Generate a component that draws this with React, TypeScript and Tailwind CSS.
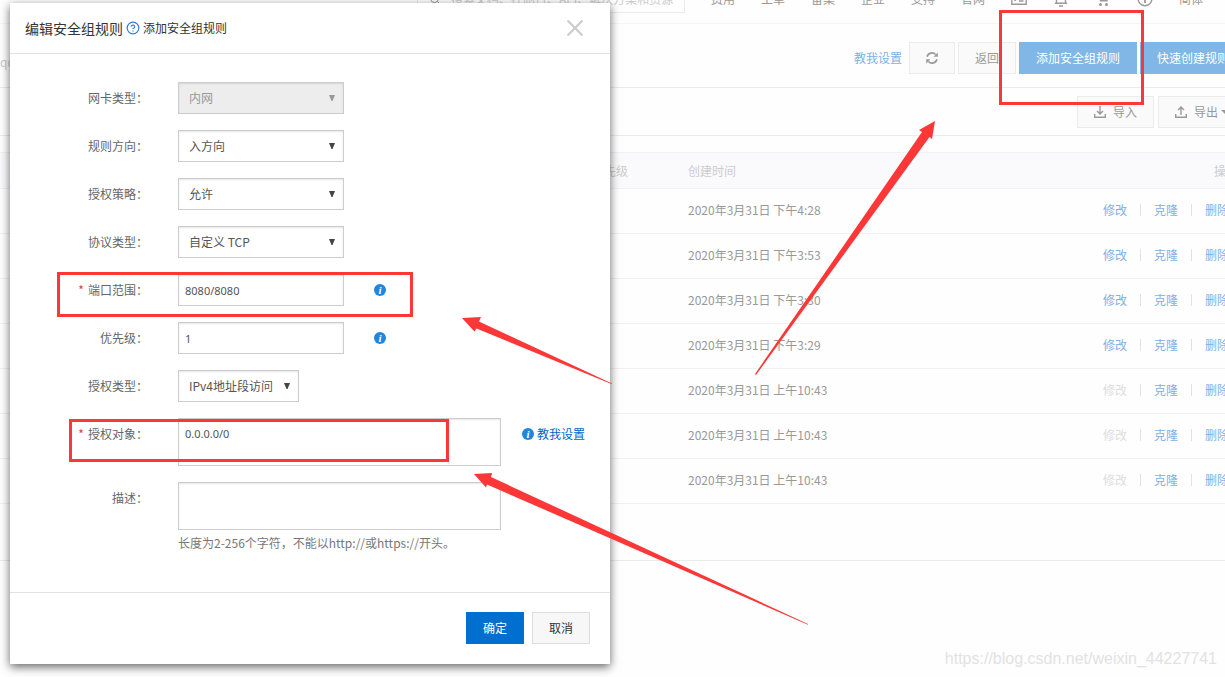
import type { ReactNode } from 'react'
import { CircleHelp, Search } from 'lucide-react'

const navItems = ['费用', '工单', '备案', '企业', '支持', '官网']

const rules = [
  { created: '2020年3月31日 下午4:28', editable: true },
  { created: '2020年3月31日 下午3:53', editable: true },
  { created: '2020年3月31日 下午3:30', editable: true },
  { created: '2020年3月31日 下午3:29', editable: true },
  { created: '2020年3月31日 上午10:43', editable: false },
  { created: '2020年3月31日 上午10:43', editable: false },
  { created: '2020年3月31日 上午10:43', editable: false },
]

const fieldClass =
  'block rounded-none border border-[#ccc] bg-white text-[#555] shadow-[inset_0_1px_2px_rgba(0,0,0,0.1)] outline-none'

function InfoDot() {
  return (
    <span className="flex h-3 w-3 items-center justify-center rounded-full bg-[#2187d8] font-['Liberation_Serif',serif] text-[11px] leading-3 font-bold text-white italic">
      i
    </span>
  )
}

function TrayIcon({ up = false }: { up?: boolean }) {
  return (
    <svg viewBox="0 0 12 12" className="h-3 w-3" fill="none" stroke="currentColor" strokeWidth="1.4">
      <path d="M.7 8v3.3h10.6V8" />
      <path d={up ? 'M6 9V1M3 4l3-3 3 3' : 'M6 0v8M3 5l3 3 3-3'} />
    </svg>
  )
}

function RefreshIcon() {
  return (
    <svg viewBox="0 0 12 12" className="h-3 w-3" fill="none" stroke="currentColor" strokeWidth="1.7">
      <path d="M1.100 4.800A5 5 0 0 1 9.600 2.500M10.900 7.200A5 5 0 0 1 2.400 9.500" />
      <path d="M11.800.6v4.200H7.600zM.2 11.400V7.200h4.200z" fill="currentColor" stroke="none" />
    </svg>
  )
}

function NavIcons() {
  return (
    <>
      <svg viewBox="0 0 16 16" className="h-4 w-4" fill="none" stroke="currentColor" strokeWidth="1.4">
        <path d="M.8 1.800h14.400v11.400H.8z" />
        <path d="M3.500 5l2.500 2.500-2.500 2.500M8 10h4.500" />
      </svg>
      <svg viewBox="0 0 16 16" className="h-4 w-4" fill="none" stroke="currentColor" strokeWidth="1.4">
        <path d="M3.500 12V7a4.500 4.500 0 0 1 9 0v5M1.800 12.200h12.400M8 1v1.500M6 15h4" />
      </svg>
      <svg viewBox="0 0 16 16" className="h-4 w-4" fill="currentColor">
        <path d="M1 2h2.500l.6 2H14l-1.500 6.500H5L3 3.400H1z" />
        <circle cx="5.500" cy="13.500" r="1.500" />
        <circle cx="11.500" cy="13.500" r="1.500" />
      </svg>
      <svg viewBox="0 0 16 16" className="h-4 w-4" fill="none" stroke="currentColor" strokeWidth="1.4">
        <circle cx="8" cy="8" r="6.800" />
        <path d="M8 4v1.500M8 7v5" strokeWidth="1.800" />
      </svg>
    </>
  )
}

function TopNav() {
  return (
    <header className="-mt-[26px] flex h-[50px] items-center justify-end gap-[26px] border-b border-[#f5f5f5] pr-[43px] text-[#999]">
      <label className="flex h-7 w-[268px] items-center gap-[10px] border border-[#ebebeb] pl-[11px]">
        <Search className="h-3 w-3 shrink-0" />
        <input
          aria-label="搜索"
          placeholder="搜索文档、控制台、API、解决方案和资源"
          className="min-w-0 flex-1 bg-transparent outline-none placeholder:text-[#ccc]"
        />
      </label>
      {navItems.map((item) => (
        <a key={item} href="#">
          {item}
        </a>
      ))}
      <NavIcons />
      <a href="#">简体</a>
    </header>
  )
}

function Toolbar() {
  const grey = 'h-8 border border-[#ebebeb] bg-[#fafafa] px-4 text-[#999]'
  const blue = 'h-8 bg-[#80b7e6] px-[17px] text-white'
  return (
    <>
      <div className="flex h-16 items-center border-b border-[#ebebeb] pt-1">
        <span className="pt-2 text-[#ccc]">qq</span>
        <div className="ml-auto flex items-center gap-[3px]">
          <a href="#" className="mr-1 text-[#7fb0e6]">
            教我设置
          </a>
          <button aria-label="刷新" className={grey}>
            <RefreshIcon />
          </button>
          <button className={grey}>返回</button>
          <button className={blue}>添加安全组规则</button>
          <button className={blue}>快速创建规则</button>
        </div>
      </div>
      <div className="flex h-12 items-center justify-end gap-1 border-b border-[#ebebeb]">
        <button className={`${grey} flex items-center gap-[7px]`}>
          <TrayIcon />
          导入
        </button>
        <button className={`${grey} flex items-center gap-[7px]`}>
          <TrayIcon up />
          <span className="flex items-center gap-[3px]">
            导出
            <svg viewBox="0 0 8 4" className="h-1 w-2" fill="currentColor">
              <path d="M0 0h8L4 4z" />
            </svg>
          </span>
        </button>
      </div>
    </>
  )
}

function RuleTable() {
  return (
    <table className="mt-4 w-full table-fixed border-collapse">
      <colgroup>
        <col className="w-[584px]" />
        <col className="w-24" />
        <col />
        <col className="w-[200px]" />
      </colgroup>
      <thead>
        <tr className="h-9 border-y border-[#f0f0f5] bg-[#fafafc] text-[#ccc]">
          <th />
          <th className="px-2 text-left font-normal">优先级</th>
          <th className="px-2 text-left font-normal">创建时间</th>
          <th className="px-2 text-right font-normal">操作</th>
        </tr>
      </thead>
      <tbody>
        {rules.map((rule, i) => (
          <tr key={i} className="h-[45px] border-b border-[#f0f0f2]">
            <td />
            <td />
            <td className="px-2 pb-0.5 text-[#999]">{rule.created}</td>
            <td className="pr-[17px] pb-0.5">
              <div className="flex items-center justify-end gap-[13px] text-[#7fb0e6]">
                <button disabled={!rule.editable} className="disabled:text-[#ddd]">
                  修改
                </button>
                <span className="h-3 w-px bg-[#e2e2e2]" />
                <button>克隆</button>
                <span className="h-3 w-px bg-[#e2e2e2]" />
                <button>删除</button>
              </div>
            </td>
          </tr>
        ))}
      </tbody>
    </table>
  )
}

function Row({ id, label, required, children }: { id: string; label: string; required?: boolean; children: ReactNode }) {
  return (
    <div className="flex items-start">
      <label htmlFor={id} className="mr-[30px] flex h-8 w-[138px] shrink-0 items-center justify-end gap-1 text-[#666]">
        {required && <span className="text-[#e04040]">*</span>}
        {label}：
      </label>
      {children}
    </div>
  )
}

function Select({ id, value, disabled, fit }: { id: string; value: string; disabled?: boolean; fit?: boolean }) {
  return (
    <div className={fit ? 'relative w-[121px]' : 'relative w-[166px]'}>
      <select
        id={id}
        disabled={disabled}
        className={`${fieldClass} h-8 w-full appearance-none pl-[10px] disabled:bg-[#ededed] disabled:text-[#999] disabled:opacity-100`}
      >
        <option>{value}</option>
      </select>
      <svg
        viewBox="0 0 6 6"
        className={`pointer-events-none absolute top-[13px] right-[9px] h-[6px] w-[6px] ${disabled ? 'text-[#999]' : 'text-[#444]'}`}
        fill="currentColor"
      >
        <path d="M0 0h6L3.500 6h-1z" />
      </svg>
    </div>
  )
}

function RuleDialog() {
  const latin = "font-['Noto_Sans','Noto_Sans_CJK_SC',sans-serif] text-[11px]"
  return (
    <div
      role="dialog"
      aria-label="编辑安全组规则"
      className="absolute top-[3px] left-[10px] w-[600px] bg-white shadow-[0_3px_9px_rgba(0,0,0,0.6)]"
    >
      <div className="flex h-[51px] items-center border-b border-[#e2e2e2] px-[15px]">
        <h1 className="text-sm text-[#333]">编辑安全组规则</h1>
        <a href="#" className="ml-[3px] flex items-center gap-[3px] text-[#333]">
          <CircleHelp className="h-[14px] w-[14px] text-[#3377d6]" />
          添加安全组规则
        </a>
        <button aria-label="关闭" className="mr-3 ml-auto text-[#ccc]">
          <svg viewBox="0 0 16 16" className="h-4 w-4" stroke="currentColor" strokeWidth="2.2">
            <path d="M.5.5l15 15M15.500.5l-15 15" />
          </svg>
        </button>
      </div>

      <form className="flex flex-col gap-4 pt-7 pb-10" onSubmit={(e) => e.preventDefault()}>
        <Row id="nic" label="网卡类型">
          <Select id="nic" value="内网" disabled />
        </Row>
        <Row id="direction" label="规则方向">
          <Select id="direction" value="入方向" />
        </Row>
        <Row id="policy" label="授权策略">
          <Select id="policy" value="允许" />
        </Row>
        <Row id="protocol" label="协议类型">
          <Select id="protocol" value="自定义 TCP" />
        </Row>
        <Row id="port" label="端口范围" required>
          <div className="flex items-center gap-[30px]">
            <input id="port" defaultValue="8080/8080" className={`${fieldClass} ${latin} h-8 w-[166px] px-[6px]`} />
            <InfoDot />
          </div>
        </Row>
        <Row id="priority" label="优先级">
          <div className="flex items-center gap-[30px]">
            <input id="priority" defaultValue="1" className={`${fieldClass} ${latin} h-8 w-[166px] px-[6px]`} />
            <InfoDot />
          </div>
        </Row>
        <Row id="auth" label="授权类型">
          <Select id="auth" value="IPv4地址段访问" fit />
        </Row>
        <Row id="target" label="授权对象" required>
          <textarea
            id="target"
            defaultValue="0.0.0.0/0"
            className={`${fieldClass} ${latin} h-12 w-[323px] resize-none px-[6px] py-[7px] leading-4`}
          />
          <a href="#" className="ml-[21px] flex h-8 items-center gap-[3px] text-[#06c]">
            <InfoDot />
            教我设置
          </a>
        </Row>
        <Row id="desc" label="描述">
          <div>
            <textarea id="desc" className={`${fieldClass} h-12 w-[323px] resize-none px-[6px] py-[7px]`} />
            <p className="mt-1 leading-[18px] text-[#777]">长度为2-256个字符，不能以http://或https://开头。</p>
          </div>
        </Row>
      </form>

      <div className="flex justify-end gap-2 border-t border-[#e2e2e2] px-5 pt-[19px] pb-5">
        <button className="h-8 w-[58px] bg-[#006fcf] text-white">确定</button>
        <button className="h-8 w-[58px] border border-[#ddd] bg-[#f7f7f7] text-[#333]">取消</button>
      </div>
    </div>
  )
}

// Hand-drawn marks laid over the console
function Marks() {
  return (
    <div className="pointer-events-none absolute inset-0">
      <div className="absolute top-[272px] left-[57px] h-[45px] w-[356px] border-3 border-[#fc3737]" />
      <div className="absolute top-[419px] left-[69px] h-[43px] w-[380px] border-3 border-[#fc3737]" />
      <div className="absolute top-[10px] left-[999px] h-[95px] w-[145px] border-3 border-[#fc3737]" />
      <svg width="1225" height="677" className="absolute top-0 left-0" fill="#fc3737">
        <path d="M462 318l19-1-2 4.500L612 383.500v.8L476.500 328.500l-2 3z" />
        <path d="M474 474l18-1-1 4L808 624v.8L487 484.500l-1 3z" />
        <path d="M935 121l-16 9 3 2-167 242 1 1 173.500-238 2.500 2z" />
      </svg>
      <span className="absolute right-2 bottom-[9px] font-['Liberation_Sans',sans-serif] text-base leading-[18px] text-[#e2e2e2]">
        https://blog.csdn.net/weixin_44227741
      </span>
    </div>
  )
}

export default function App() {
  return (
    <div className="relative min-h-screen overflow-hidden bg-[#fefefe] font-['Noto_Sans_CJK_SC',sans-serif] text-xs">
      <main className="-mr-[21px]">
        <TopNav />
        <Toolbar />
        <RuleTable />
        <div className="h-[57px] border-b border-[#ebebeb]" />
      </main>
      <RuleDialog />
      <Marks />
    </div>
  )
}
